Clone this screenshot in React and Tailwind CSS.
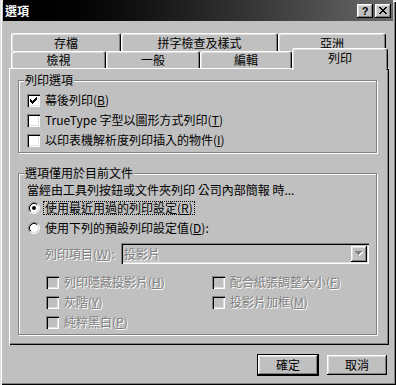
import React from "react";

const raised =
  "shadow-[inset_-1px_-1px_#000,inset_1px_1px_#fff,inset_-2px_-2px_#808080,inset_2px_2px_#dfdfdf]";
const sunken =
  "shadow-[inset_1px_1px_#808080,inset_2px_2px_#000,inset_-1px_-1px_#fff,inset_-2px_-2px_#dfdfdf]";
const dis = "text-[#808080] [text-shadow:1px_1px_0_#fff]";

function Check({ checked, disabled }) {
  return (
    <span
      className={`w-[13px] h-[13px] shrink-0 flex items-center justify-center ${sunken} ${
        disabled ? "bg-[#c0c0c0]" : "bg-white"
      }`}
    >
      {checked && (
        <svg width="7" height="7" viewBox="0 0 7 7" shapeRendering="crispEdges">
          <path
            d="M0 2h1v3h-1z M1 3h1v3h-1z M2 4h1v3h-1z M3 3h1v3h-1z M4 2h1v3h-1z M5 1h1v3h-1z M6 0h1v3h-1z"
            fill="#000"
          />
        </svg>
      )}
    </span>
  );
}

function Radio({ on }) {
  return (
    <svg width="12" height="12" viewBox="0 0 12 12" className="shrink-0">
      <circle cx="6" cy="6" r="4.5" fill="#fff" />
      <path d="M2.11 9.89 A5.5 5.5 0 0 1 9.89 2.11" stroke="#808080" fill="none" />
      <path d="M9.89 2.11 A5.5 5.5 0 0 1 2.11 9.89" stroke="#fff" fill="none" />
      <path d="M2.82 9.18 A4.5 4.5 0 0 1 9.18 2.82" stroke="#000" fill="none" />
      <path d="M9.18 2.82 A4.5 4.5 0 0 1 2.82 9.18" stroke="#dfdfdf" fill="none" />
      {on && <circle cx="6" cy="6" r="2" fill="#000" />}
    </svg>
  );
}

function Tab({ cls, children }) {
  return (
    <div
      className={`${cls} shrink-0 rounded-t-[3px] border-l border-t border-white border-r border-r-black shadow-[inset_-1px_0_#808080,inset_1px_1px_#dfdfdf] bg-[#c0c0c0] flex items-center justify-center`}
    >
      {children}
    </div>
  );
}

function U({ children }) {
  return <span className="underline underline-offset-[1px]">{children}</span>;
}

export default function App() {
  return (
    <div
      className={`w-[396px] h-[385px] bg-[#c0c0c0] flex flex-col px-[3px] pb-[3px] text-[12px] leading-[14px] text-black font-['Noto_Sans_CJK_TC','Noto_Sans',sans-serif] shadow-[inset_1px_1px_#dfdfdf,inset_2px_2px_#fff,inset_-1px_-1px_#000,inset_-2px_-2px_#808080]`}
    >
      {/* title bar */}
      <div className="h-[21px] shrink-0 flex items-center bg-linear-to-r from-black to-[#6a6a6a] pl-[2px] pr-[2px]">
        <span className="text-white font-bold text-[12px] leading-[14px]">選項</span>
        <div className="ml-auto flex items-center gap-[2px]">
          <div className={`w-[16px] h-[14px] bg-[#c0c0c0] ${raised} flex items-center justify-center font-bold text-[11px] leading-[12px] font-['Liberation_Sans',sans-serif]`}>
            ?
          </div>
          <div className={`w-[16px] h-[14px] bg-[#c0c0c0] ${raised} flex items-center justify-center`}>
            <svg width="8" height="7" viewBox="0 0 8 7" shapeRendering="crispEdges">
              <path
                d="M0 0h2v1h-2z M6 0h2v1h-2z M1 1h2v1h-2z M5 1h2v1h-2z M2 2h4v1h-4z M3 3h2v1h-2z M2 4h4v1h-4z M1 5h2v1h-2z M5 5h2v1h-2z M0 6h2v1h-2z M6 6h2v1h-2z"
                fill="#000"
              />
            </svg>
          </div>
        </div>
      </div>

      {/* tabs row 1 */}
      <div className="flex ml-[8px] mt-[12px] h-[18px] shrink-0">
        <Tab cls="w-[110px] h-[18px]">存檔</Tab>
        <Tab cls="w-[157px] h-[18px]">拼字檢查及樣式</Tab>
        <Tab cls="w-[108px] h-[18px]">亞洲</Tab>
      </div>
      {/* tabs row 2 */}
      <div className="flex items-end ml-[8px] -mt-[3px] h-[20px] shrink-0 relative z-10">
        <Tab cls="w-[95px] h-[17px]">檢視</Tab>
        <Tab cls="w-[94px] h-[17px]">一般</Tab>
        <Tab cls="w-[92px] h-[17px]">編輯</Tab>
        <Tab cls="w-[96px] h-[22px] -mb-[2px] pb-[3px]">列印</Tab>
      </div>

      {/* panel */}
      <div
        className={`ml-[6px] w-[380px] h-[277px] shrink-0 flex flex-col shadow-[inset_1px_1px_#fff,inset_-1px_-1px_#000,inset_-2px_-2px_#808080]`}
      >
        {/* group 1 */}
        <div className="relative ml-[9px] mt-[12px] w-[359px] h-[73px] shrink-0 border border-[#808080] shadow-[1px_1px_#fff,inset_1px_1px_#fff] pt-[9px] pl-[8px]">
          <span className="absolute left-[5px] -top-[8px] px-[1px] bg-[#c0c0c0]">列印選項</span>
          <div className="flex items-center h-[20px]">
            <Check checked />
            <span className="ml-[5px]">
              幕後列印(<U>B</U>)
            </span>
          </div>
          <div className="flex items-center h-[20px]">
            <Check />
            <span className="ml-[5px]">
              TrueType 字型以圖形方式列印(<U>T</U>)
            </span>
          </div>
          <div className="flex items-center h-[20px]">
            <Check />
            <span className="ml-[5px]">
              以印表機解析度列印插入的物件(<U>I</U>)
            </span>
          </div>
        </div>

        {/* group 2 */}
        <div className="relative ml-[9px] mt-[20px] w-[359px] h-[162px] shrink-0 border border-[#808080] shadow-[1px_1px_#fff,inset_1px_1px_#fff] pt-[8px] pl-[8px]">
          <span className="absolute left-[5px] -top-[8px] px-[1px] bg-[#c0c0c0]">選項僅用於目前文件</span>
          <div className="flex items-center h-[16px]">當經由工具列按鈕或文件夾列印 公司內部簡報 時...</div>
          <div className="flex items-center h-[20px] pl-[1px]">
            <Radio on />
            <span className="ml-[3px] border border-dotted border-black px-[1px] leading-[12px]">
              使用最近用過的列印設定(<U>R</U>)
            </span>
          </div>
          <div className="flex items-center h-[20px] pl-[1px]">
            <Radio />
            <span className="ml-[5px]">
              使用下列的預設列印設定值(<U>D</U>):
            </span>
          </div>
          <div className="flex items-center h-[21px] mt-[5px] pl-[18px]">
            <span className={`w-[76px] shrink-0 ${dis}`}>
              列印項目(<U>W</U>):
            </span>
            <div className={`w-[248px] h-[21px] ${sunken} flex items-center pl-[3px] pr-[2px]`}>
              <span className={dis}>投影片</span>
              <div className={`ml-auto w-[16px] h-[16px] bg-[#c0c0c0] ${raised} flex items-center justify-center`}>
                <svg width="8" height="5" viewBox="0 0 8 5" shapeRendering="crispEdges">
                  <path d="M1 1h7v1h-1v1h-1v1h-1v1h-1v-1h-1z" fill="#fff" />
                  <path d="M0 0h7v1h-1v1h-1v1h-1v1h-1v-1h-1v-1h-1v-1h-1z" fill="#808080" />
                </svg>
              </div>
            </div>
          </div>
          <div className="grid grid-cols-[166px_1fr] ml-[19px] mt-[8px]">
            <div className="flex items-center h-[20px]">
              <Check disabled />
              <span className={`ml-[5px] ${dis}`}>
                列印隱藏投影片(<U>H</U>)
              </span>
            </div>
            <div className="flex items-center h-[20px]">
              <Check disabled />
              <span className={`ml-[5px] ${dis}`}>
                配合紙張調整大小(<U>F</U>)
              </span>
            </div>
            <div className="flex items-center h-[20px]">
              <Check disabled />
              <span className={`ml-[5px] ${dis}`}>
                灰階(<U>Y</U>)
              </span>
            </div>
            <div className="flex items-center h-[20px]">
              <Check disabled />
              <span className={`ml-[5px] ${dis}`}>
                投影片加框(<U>M</U>)
              </span>
            </div>
            <div className="flex items-center h-[20px]">
              <Check disabled />
              <span className={`ml-[5px] ${dis}`}>
                純粹黑白(<U>P</U>)
              </span>
            </div>
          </div>
        </div>
      </div>

      {/* buttons */}
      <div className="flex items-center justify-end gap-[8px] pr-[6px] mt-[9px]">
        <div className="w-[62px] h-[22px] border border-black flex">
          <div className={`flex-1 bg-[#c0c0c0] ${raised} flex items-center justify-center`}>確定</div>
        </div>
        <div className={`w-[60px] h-[20px] bg-[#c0c0c0] ${raised} flex items-center justify-center`}>取消</div>
      </div>
    </div>
  );
}
